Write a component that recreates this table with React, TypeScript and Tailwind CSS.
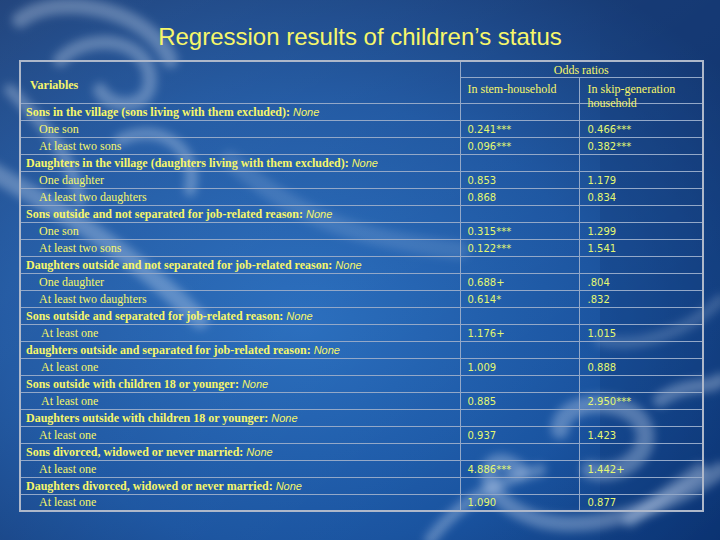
import React from "react";

type Row = {
  label: string;
  bold?: boolean;
  indent?: number;
  stem?: string;
  skip?: string;
};

const rows: Row[] = [
  { label: "Sons in the village (sons living with them excluded): ", bold: true },
  { label: "One son", indent: 18, stem: "0.241***", skip: "0.466***" },
  { label: "At least two sons", indent: 18, stem: "0.096***", skip: "0.382***" },
  { label: "Daughters in the village (daughters living with them excluded): ", bold: true },
  { label: "One daughter", indent: 18, stem: "0.853", skip: "1.179" },
  { label: "At least two daughters", indent: 18, stem: "0.868", skip: "0.834" },
  { label: "Sons outside and not separated for job-related reason: ", bold: true },
  { label: "One son", indent: 18, stem: "0.315***", skip: "1.299" },
  { label: "At least two sons", indent: 18, stem: "0.122***", skip: "1.541" },
  { label: "Daughters outside and not separated for job-related reason: ", bold: true },
  { label: "One daughter", indent: 18, stem: "0.688+", skip: ".804" },
  { label: "At least two daughters", indent: 18, stem: "0.614*", skip: ".832" },
  { label: "Sons outside and separated for job-related reason: ", bold: true },
  { label: "At least one", indent: 20, stem: "1.176+", skip: "1.015" },
  { label: "daughters outside and separated for job-related reason: ", bold: true },
  { label: "At least one", indent: 20, stem: "1.009", skip: "0.888" },
  { label: "Sons outside with children 18 or younger: ", bold: true },
  { label: "At least one", indent: 20, stem: "0.885", skip: "2.950***" },
  { label: "Daughters outside with children 18 or younger: ", bold: true },
  { label: "At least one", indent: 18, stem: "0.937", skip: "1.423" },
  { label: "Sons divorced, widowed or never married: ", bold: true },
  { label: "At least one", indent: 18, stem: "4.886***", skip: "1.442+" },
  { label: "Daughters divorced, widowed or never married: ", bold: true },
  { label: "At least one", indent: 18, stem: "1.090", skip: "0.877" },
];

const serif = "font-['Liberation_Serif',serif]";
const num = "font-['DejaVu_Sans',sans-serif] text-[10px] text-[#e4f872]";

function Backdrop() {
  return (
    <svg className="absolute inset-0" width="720" height="540" viewBox="0 0 720 540">
      <defs>
        <radialGradient id="glow" cx="0.42" cy="0.6" r="0.75">
          <stop offset="0" stopColor="#2168bb" />
          <stop offset="0.55" stopColor="#15509e" />
          <stop offset="1" stopColor="#0a2f6c" />
        </radialGradient>
        <linearGradient id="streak" x1="0" y1="0" x2="1" y2="1">
          <stop offset="0" stopColor="#ffffff" stopOpacity="0.25" />
          <stop offset="1" stopColor="#ffffff" stopOpacity="0" />
        </linearGradient>
        <filter id="soft">
          <feGaussianBlur stdDeviation="4" />
        </filter>
      </defs>
      <rect width="720" height="540" fill="url(#glow)" />
      <rect x="600" y="0" width="120" height="540" fill="#0b3372" opacity="0.3" />
      <g fill="none" stroke="#d4e3f6" strokeOpacity="0.32" strokeLinecap="round" filter="url(#soft)">
        <path d="M20 20 C 60 -10, 150 10, 170 60" strokeWidth="16" />
        <path d="M60 60 C 90 30, 150 40, 150 80 C 150 110, 110 110, 100 90" strokeWidth="14" />
        <path d="M10 90 C 40 120, 70 150, 80 200" strokeWidth="12" />
        <path d="M120 140 C 160 120, 200 150, 190 190" strokeWidth="12" />
        <path d="M-10 170 C 40 200, 120 240, 200 320" strokeWidth="18" />
        <path d="M230 160 C 300 220, 360 240, 460 250" strokeWidth="18" strokeOpacity="0.15" />
      </g>
      <g fill="none" stroke="#d4e3f6" strokeOpacity="0.34" strokeLinecap="round" filter="url(#soft)">
        <path d="M560 430 C 560 400, 620 395, 640 420 C 660 450, 620 480, 590 470" strokeWidth="18" />
        <path d="M520 470 C 480 440, 470 500, 540 520 C 600 535, 680 500, 720 470" strokeWidth="16" />
        <path d="M660 400 C 690 380, 710 390, 720 380" strokeWidth="14" />
        <path d="M700 470 L 630 520" strokeWidth="14" />
        <path d="M430 540 C 460 500, 500 480, 540 470" strokeWidth="12" />
        <path d="M600 340 C 640 350, 690 330, 720 300" strokeWidth="12" strokeOpacity="0.2" />
      </g>
      <rect x="0" y="0" width="720" height="540" fill="url(#streak)" opacity="0.4" />
    </svg>
  );
}

export default function App() {
  return (
    <div className="relative w-[720px] h-[540px] overflow-hidden bg-[#134c98]">
      <Backdrop />
      <div className="relative flex flex-col">
        <h1 className="pt-[22px] h-[60px] text-center font-['Liberation_Sans',sans-serif] text-[24px] leading-[29px] text-[#f6f66a]">
          Regression results of children’s status
        </h1>
        <table className="ml-[19px] w-[683px] border-collapse border-2 border-[#aeb8ca] table-fixed text-[#f6f66a]">
          <colgroup>
            <col className="w-[440px]" />
            <col className="w-[119px]" />
            <col className="w-[124px]" />
          </colgroup>
          <thead>
            <tr className="h-[16px]">
              <th rowSpan={2} className={`${serif} border border-[#93a8c8] text-left align-middle pl-[9px] pt-[6px] text-[12px] font-bold`}>
                Variables
              </th>
              <th colSpan={2} className={`${serif} border border-[#93a8c8] text-center align-bottom text-[12px] font-normal leading-[13px]`}>
                Odds ratios
              </th>
            </tr>
            <tr className="h-[26px]">
              <th className={`${serif} border border-[#93a8c8] text-left align-top pl-[7px] pt-[4px] text-[12px] font-normal leading-[14px]`}>
                In stem-household
              </th>
              <th className={`${serif} border border-[#93a8c8] text-left align-top pl-[8px] pt-[4px] pr-[14px] text-[12px] font-normal leading-[14px]`}>
                <div className="h-[18px]">In skip-generation household</div>
              </th>
            </tr>
          </thead>
          <tbody>
            {rows.map((r, i) => (
              <tr key={i} className="h-[17px]">
                <td
                  className={`${serif} border border-[#93a8c8] align-bottom pb-[1px] text-[12px] leading-[14px] whitespace-nowrap ${r.bold ? "font-bold pl-[5px]" : ""}`}
                  style={r.indent ? { paddingLeft: r.indent } : undefined}
                >
                  {r.label}
                  {r.bold && (
                    <span className="font-['Liberation_Sans',sans-serif] italic font-normal text-[11px]">None</span>
                  )}
                </td>
                <td className={`${num} border border-[#93a8c8] align-bottom pl-[7px] pb-[1px] leading-[13px]`}>{r.stem}</td>
                <td className={`${num} border border-[#93a8c8] align-bottom pl-[8px] pb-[1px] leading-[13px]`}>{r.skip}</td>
              </tr>
            ))}
          </tbody>
        </table>
      </div>
    </div>
  );
}
